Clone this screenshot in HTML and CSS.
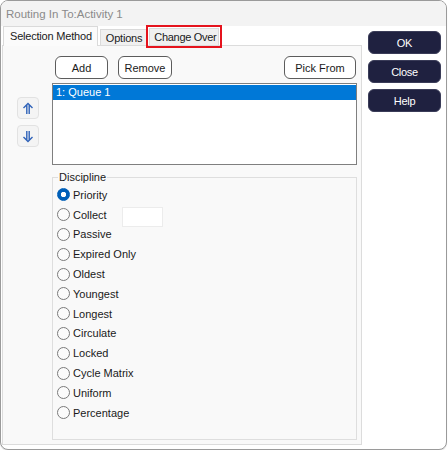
FILE: index.html
```html
<!DOCTYPE html>
<html>
<head>
<meta charset="utf-8">
<link rel="stylesheet" href="styles.css">
</head>
<body>
<div class="window">
  <div class="titlebar">Routing In To:Activity 1</div>
  <div class="main">
    <div class="left">
      <div class="tabstrip">
        <div class="tab selected">Selection Method</div>
        <div class="tab options">Options</div>
        <div class="tab marked">Change Over</div>
      </div>
      <div class="panel">
        <div class="arrows">
          <div class="arrowbtn">
            <svg width="12" height="13" viewBox="0 0 12 13"><path d="M1.5 6 L6 1.5 L10.5 6 M4.8 3 V12 M7.2 3 V12" fill="none" stroke="#2f62b8" stroke-width="1.4"/></svg>
          </div>
          <div class="arrowbtn">
            <svg width="12" height="13" viewBox="0 0 12 13"><path d="M1.5 7 L6 11.5 L10.5 7 M4.8 10 V1 M7.2 10 V1" fill="none" stroke="#2f62b8" stroke-width="1.4"/></svg>
          </div>
        </div>
        <div class="content">
          <div class="btnrow">
            <div class="btn add">Add</div>
            <div class="btn remove">Remove</div>
            <div class="btn pick">Pick From</div>
          </div>
          <div class="listbox">
            <div class="listitem sel">1: Queue 1</div>
          </div>
          <fieldset class="group">
            <legend>Discipline</legend>
            <div class="opt"><span class="radio on"></span><span>Priority</span></div>
            <div class="opt"><span class="radio"></span><span class="collect-label">Collect</span><span class="textbox"></span></div>
            <div class="opt"><span class="radio"></span><span>Passive</span></div>
            <div class="opt"><span class="radio"></span><span>Expired Only</span></div>
            <div class="opt"><span class="radio"></span><span>Oldest</span></div>
            <div class="opt"><span class="radio"></span><span>Youngest</span></div>
            <div class="opt"><span class="radio"></span><span>Longest</span></div>
            <div class="opt"><span class="radio"></span><span>Circulate</span></div>
            <div class="opt"><span class="radio"></span><span>Locked</span></div>
            <div class="opt"><span class="radio"></span><span>Cycle Matrix</span></div>
            <div class="opt"><span class="radio"></span><span>Uniform</span></div>
            <div class="opt"><span class="radio"></span><span>Percentage</span></div>
          </fieldset>
        </div>
      </div>
    </div>
    <div class="side">
      <div class="dbtn">OK</div>
      <div class="dbtn">Close</div>
      <div class="dbtn">Help</div>
    </div>
  </div>
</div>
</body>
</html>
```
FILE: styles.css
```css
* { box-sizing: border-box; }
html, body { margin: 0; padding: 0; background: #ffffff; }
body {
  font-family: "Liberation Sans", Arial, sans-serif;
  font-size: 11px;
  color: #1a1a1a;
}
.window {
  width: 447px;
  height: 450px;
  border: 1px solid #9a9a9a;
  border-radius: 8px;
  background: #ffffff;
  overflow: hidden;
  display: flex;
  flex-direction: column;
  box-shadow: 0 1px 1px rgba(0,0,0,0.12);
}
.titlebar {
  height: 25px;
  flex: none;
  background: #f3f3f3;
  color: #8a8a8a;
  font-size: 11.5px;
  padding-left: 5px;
  display: flex;
  align-items: center;
}
.main {
  flex: 1;
  display: flex;
}
.left {
  width: 361px;
  display: flex;
  flex-direction: column;
}
.tabstrip {
  height: 19px;
  display: flex;
  align-items: flex-end;
  padding-left: 2px;
  gap: 1px;
  white-space: nowrap;
}
.tab {
  height: 16px;
  padding: 0 3px 0 4px;
  background: #f0f0f0;
  border: 1px solid #dadada;
  border-bottom: none;
  display: flex;
  align-items: center;
  color: #1a1a1a;
  letter-spacing: -0.2px;
}
.tab.selected {
  height: 20px;
  margin-bottom: -1px;
  padding: 0 5px 2px 6px;
  background: #fbfbfb;
  position: relative;
  z-index: 1;
}
.tab.options {
  margin-left: 1px;
  padding: 0 4px 0 5px;
}
.tab.marked {
  margin-left: 1px;
  height: 17px;
  padding: 0 2px 0 4px;
  letter-spacing: -0.3px;
  outline: 2px solid #e5131d;
  outline-offset: 1px;
  position: relative;
  z-index: 2;
}
.panel {
  margin-left: 1px;
  height: 400px;
  background: #f9f9f9;
  border: 1px solid #dcdcdc;
  display: flex;
}
.arrows {
  width: 49px;
  padding: 51px 0 0 14px;
  display: flex;
  flex-direction: column;
  gap: 6px;
}
.arrowbtn {
  width: 22px;
  height: 22px;
  border: 1px solid #e2e2e2;
  border-radius: 4px;
  background: #f4f4f4;
  display: flex;
  align-items: center;
  justify-content: center;
}
.content {
  width: 305px;
  padding-top: 10px;
  display: flex;
  flex-direction: column;
}
.btnrow {
  height: 23px;
  display: flex;
}
.btn {
  height: 23px;
  border: 1px solid #5c5c5c;
  border-radius: 6px;
  background: #ffffff;
  display: flex;
  align-items: center;
  justify-content: center;
}
.btn.add { width: 53px; margin-left: 3px; }
.btn.remove { width: 54px; margin-left: 10px; }
.btn.pick { width: 72px; margin-left: auto; margin-right: 1px; }
.listbox {
  margin-top: 4px;
  height: 82px;
  border: 1px solid #7f7f7f;
  background: #ffffff;
  padding: 1px 0 0 0;
}
.listitem {
  height: 15px;
  line-height: 15px;
  padding-left: 3px;
}
.listitem.sel {
  background: #0078d7;
  color: #ffffff;
}
.group {
  margin: 6px 0 0 0;
  height: 269px;
  border: 1px solid #dedede;
  padding: 1px 0 0 4px;
}
.group legend {
  padding: 0 1px;
  margin-left: 1px;
  line-height: 13px;
  color: #1a1a1a;
}
.opt {
  height: 19.8px;
  display: flex;
  align-items: center;
  gap: 3px;
}
.radio {
  width: 13px;
  height: 13px;
  border: 1px solid #7a7a7a;
  border-radius: 50%;
  background: #fbfbfb;
  flex: none;
}
.radio.on {
  border-color: #005fb8;
  background: radial-gradient(circle, #ffffff 0 2.4px, #005fb8 3px);
}
.collect-label { width: 46px; }
.textbox {
  width: 41px;
  height: 20px;
  margin-top: 4px;
  background: #ffffff;
  border: 1px solid #ececec;
  flex: none;
}
.side {
  flex: 1;
  padding: 5px 0 0 6px;
  display: flex;
  flex-direction: column;
  gap: 6px;
}
.dbtn {
  width: 73px;
  height: 23px;
  background: #1f2140;
  border: 1px solid #3a3c58;
  border-radius: 6px;
  color: #ffffff;
  display: flex;
  align-items: center;
  justify-content: center;
  letter-spacing: -0.3px;
}
```
